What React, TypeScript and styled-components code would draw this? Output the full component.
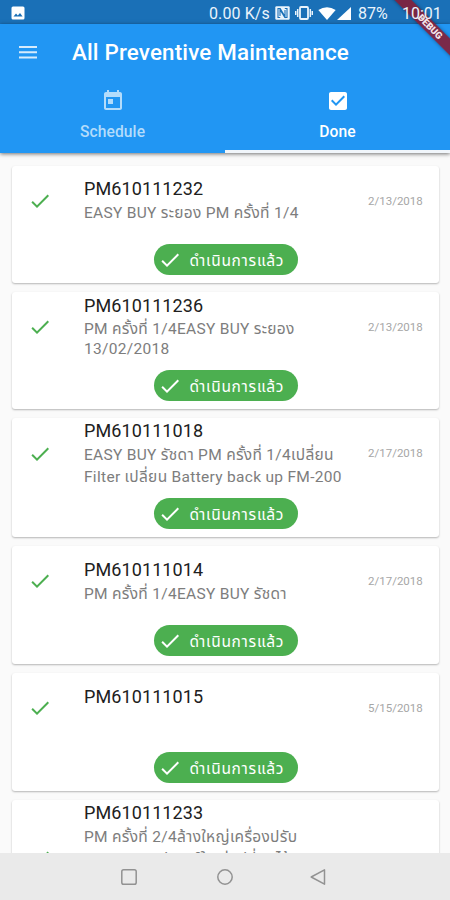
import React from "react";
import styled, { createGlobalStyle } from "styled-components";

const Global = createGlobalStyle`
  * { box-sizing: border-box; }
  body { margin: 0; background: #fafafa; font-family: Roboto, "Noto Sans Thai", "Noto Sans", sans-serif; }
`;
const Screen = styled.div`
  position: relative;
  width: 450px;
  height: 900px;
  overflow: hidden;
  display: flex;
  flex-direction: column;
  background: #fafafa;
`;
const StatusBar = styled.div`
  height: 24px;
  flex: none;
  display: flex;
  align-items: center;
  padding: 2px 8px 0 11px;
  background: #1a70b7;
  color: #eaf4fc;
  font-size: 16px;
  white-space: nowrap;
`;
const Spacer = styled.div` flex: 1; `;
const Speed = styled.span` width: 61px; margin-right: 5px; letter-spacing: 0.1px; `;
const Battery = styled.span` width: 33px; margin-left: 7px; `;
const Clock = styled.span`
  position: relative;
  z-index: 4;
  width: 40px;
  margin-left: 11px;
`;
const StatusIcon = styled.svg<{ $gap?: number }>`
  display: block;
  flex: none;
  margin-right: ${(p) => p.$gap ?? 0}px;
`;
const Header = styled.header`
  height: 129px;
  flex: none;
  position: relative;
  z-index: 1;
  background: #2196f3;
  box-shadow: 0 1px 4px rgba(0, 0, 0, 0.55);
`;
const Toolbar = styled.div`
  height: 56px;
  display: flex;
  align-items: center;
  padding-left: 19px;
`;
const MenuIcon = styled.svg` display: block; margin-right: 35px; `;
const Heading = styled.h1`
  margin: 0;
  font-size: 22.4px;
  font-weight: 500;
  letter-spacing: 0.16px;
  line-height: 26px;
  padding-bottom: 1px;
  color: #fff;
  white-space: nowrap;
`;
const Tabs = styled.div` display: grid; grid-template-columns: 1fr 1fr; height: 73px; `;
const Tab = styled.div<{ $active?: boolean }>`
  display: flex;
  flex-direction: column;
  align-items: center;
  padding-top: 9px;
  color: ${(p) => (p.$active ? "#fff" : "#b3dcfb")};
  border-bottom: 3px solid ${(p) => (p.$active ? "#f1f6fb" : "transparent")};
  font-size: 15.6px;
  font-weight: 500;
  line-height: 20px;
  letter-spacing: 0.1px;
`;
const TabIcon = styled.svg` display: block; margin-bottom: 9px; `;
const List = styled.main`
  height: 700px;
  flex: none;
  overflow: hidden;
  padding: 13px 11px 0 12px;
`;
const Card = styled.article<{ $height: number }>`
  height: ${(p) => p.$height}px;
  margin-bottom: 9px;
  display: flex;
  flex-direction: column;
  background: #fff;
  border-radius: 3px;
  box-shadow: 0 1px 2px rgba(0, 0, 0, 0.28);
`;
const Tile = styled.div` flex: 1; min-height: 0; display: flex; align-items: flex-start; `;
const Mark = styled.svg<{ $top: number }>`
  display: block;
  flex: none;
  margin: ${(p) => p.$top}px 32px 0 16px;
`;
const Body = styled.div<{ $top: number }>`
  width: 274px;
  flex: none;
  padding-top: ${(p) => p.$top}px;
`;
const Name = styled.div`
  font-size: 18px;
  line-height: 24px;
  height: 25px;
  color: #202020;
  letter-spacing: 0.1px;
`;
const Note = styled.div<{ $lead: number }>`
  font-size: 15.5px;
  line-height: ${(p) => p.$lead}px;
  color: #7d7d7d;
  white-space: nowrap;
  letter-spacing: 0.3px;
`;
const When = styled.time`
  margin: 27px 0 0 10px;
  font-size: 11.5px;
  line-height: 16px;
  color: #a6a6a6;
  white-space: nowrap;
`;
const Chip = styled.div`
  align-self: center;
  flex: none;
  width: 144px;
  height: 31px;
  margin-bottom: 8px;
  border-radius: 16px;
  background: #4caf50;
  color: #fff;
  display: flex;
  align-items: center;
  padding-left: 4px;
  font-size: 15.5px;
  white-space: nowrap;
`;
const ChipLabel = styled.span`
  margin: 3px 0 0 8px;
  line-height: 22px;
  letter-spacing: 0.7px;
`;
const NavBar = styled.nav`
  flex: 1;
  display: flex;
  align-items: center;
  justify-content: space-between;
  padding: 0 122px 0 119px;
  background: #eaeaea;
`;
const NavIcon = styled.svg<{ $shift?: boolean }>`
  display: block;
  margin-left: ${(p) => (p.$shift ? 3 : 0)}px;
`;
const Ribbon = styled.div`
  position: absolute;
  z-index: 3;
  top: 21px;
  right: -50px;
  width: 140px;
  height: 12px;
  transform: rotate(45deg);
  background: rgba(132, 30, 55, 0.9);
  box-shadow: 0 0 4px rgba(0, 0, 0, 0.4);
  color: #f5e5ea;
  font-size: 9.5px;
  font-weight: 900;
  line-height: 12px;
  text-align: center;
`;

const CHECK = "M9 16.17 4.83 12l-1.42 1.41L9 19 21 7l-1.41-1.41z";

type Job = { id: string; lines: string[]; date: string; height: number; top: number; lead: number; mark: number };
const jobs: Job[] = [
  { id: "PM610111232", lines: ["EASY BUY ระยอง PM ครั้งที่ 1/4"], date: "2/13/2018", height: 117, top: 11, lead: 22, mark: 23 },
  { id: "PM610111236", lines: ["PM ครั้งที่ 1/4EASY BUY ระยอง", "13/02/2018"], date: "2/13/2018", height: 117, top: 2, lead: 20, mark: 23 },
  { id: "PM610111018", lines: ["EASY BUY รัชดา PM ครั้งที่ 1/4เปลี่ยน", "Filter เปลี่ยน Battery back up FM-200"], date: "2/17/2018", height: 119, top: 1, lead: 22, mark: 24 },
  { id: "PM610111014", lines: ["PM ครั้งที่ 1/4EASY BUY รัชดา"], date: "2/17/2018", height: 118, top: 12, lead: 22, mark: 23 },
  { id: "PM610111015", lines: [], date: "5/15/2018", height: 118, top: 12, lead: 22, mark: 23 },
  { id: "PM610111233", lines: ["PM ครั้งที่ 2/4ล้างใหญ่เครื่องปรับ", "อากาศและอุปกรณ์ใหญ่ เปลี่ยนไส้"], date: "", height: 140, top: 1, lead: 22, mark: 46 },
];

export default function App() {
  return (
    <Screen>
      <Global />
      <StatusBar>
        <StatusIcon width="14" height="14" viewBox="0 0 14 14">
          <rect x="0.5" y="0.5" width="13" height="13" rx="1.5" fill="#fff" />
          <path d="M2.5 10.5 5 7.5l1.8 2L9 7l2.6 3.5z" fill="#1a70b7" />
        </StatusIcon>
        <Spacer />
        <Speed>0.00 K/s</Speed>
        <StatusIcon width="15" height="14" viewBox="0 0 15 14" $gap={5}>
          <rect x="0.3" y="0.3" width="14.4" height="13.4" rx="1.2" fill="#eaf4fc" />
          <path d="M5.2 11.5H3V2.5h2.2l4.8 8V4M9.8 2.5H12v9H9.8L5 3.8V10" fill="none" stroke="#1a70b7" strokeWidth="1.1" />
        </StatusIcon>
        <StatusIcon width="18" height="14" viewBox="0 0 18 14" $gap={5}>
          <rect x="5" y="1" width="8" height="12" rx="1" fill="none" stroke="#eaf4fc" strokeWidth="1.8" />
          <path d="M2.7 3v8M15.3 3v8M.7 5v4M17.3 5v4" stroke="#eaf4fc" strokeWidth="1.5" />
        </StatusIcon>
        <StatusIcon width="18" height="13" viewBox="0 0 18 13" $gap={1}>
          <path d="M.3 3Q9-2.4 17.7 3L9 13z" fill="#fff" />
        </StatusIcon>
        <StatusIcon width="14" height="13" viewBox="0 0 14 13">
          <path d="M14 0v13H0z" fill="#fff" />
        </StatusIcon>
        <Battery>87%</Battery>
        <Clock>10:01</Clock>
      </StatusBar>
      <Header>
        <Toolbar>
          <MenuIcon width="18" height="14" viewBox="0 0 18 14">
            <path d="M0 2h18M0 7.2h18M0 12.4h18" stroke="#d6ebfc" strokeWidth="2" />
          </MenuIcon>
          <Heading>All Preventive Maintenance</Heading>
        </Toolbar>
        <Tabs>
          <Tab>
            <TabIcon width="24" height="24" viewBox="0 0 24 24" fill="currentColor">
              <path d="M19 3h-1V1h-2v2H8V1H6v2H5c-1.11 0-1.99.9-1.99 2L3 19c0 1.1.89 2 2 2h14c1.1 0 2-.9 2-2V5c0-1.1-.9-2-2-2zm0 16H5V8h14v11zM7 10h5v5H7z" />
            </TabIcon>
            Schedule
          </Tab>
          <Tab $active>
            <TabIcon width="24" height="24" viewBox="0 0 24 24" fill="currentColor">
              <path d="M19 3H5c-1.11 0-2 .9-2 2v14c0 1.1.89 2 2 2h14c1.11 0 2-.9 2-2V5c0-1.1-.89-2-2-2zm-9 14-5-5 1.41-1.41L10 14.17l7.59-7.59L19 8l-9 9z" />
            </TabIcon>
            Done
          </Tab>
        </Tabs>
      </Header>
      <List>
        {jobs.map((j) => (
          <Card key={j.id} $height={j.height}>
            <Tile>
              <Mark $top={j.mark} width="24" height="24" viewBox="0 0 24 24" fill="#4caf50">
                <path d={CHECK} />
              </Mark>
              <Body $top={j.top}>
                <Name>{j.id}</Name>
                {j.lines.map((l) => (
                  <Note key={l} $lead={j.lead}>{l}</Note>
                ))}
              </Body>
              <When>{j.date}</When>
            </Tile>
            <Chip>
              <svg width="24" height="24" viewBox="0 0 24 24" fill="#fff">
                <path d={CHECK} />
              </svg>
              <ChipLabel>ดำเนินการแล้ว</ChipLabel>
            </Chip>
          </Card>
        ))}
      </List>
      <NavBar>
        <NavIcon width="20" height="20" viewBox="0 0 20 20" fill="none" stroke="#929292" strokeWidth="1.5">
          <rect x="2.8" y="2.8" width="14.4" height="14.4" rx="1.8" />
        </NavIcon>
        <NavIcon $shift width="20" height="20" viewBox="0 0 20 20" fill="none" stroke="#929292" strokeWidth="1.5">
          <circle cx="10" cy="10" r="7.2" />
        </NavIcon>
        <NavIcon width="20" height="20" viewBox="0 0 20 20" fill="none" stroke="#929292" strokeWidth="1.5" strokeLinejoin="round">
          <path d="M16.5 2.8v14.4L3.2 10z" />
        </NavIcon>
      </NavBar>
      <Ribbon>DEBUG</Ribbon>
    </Screen>
  );
}
